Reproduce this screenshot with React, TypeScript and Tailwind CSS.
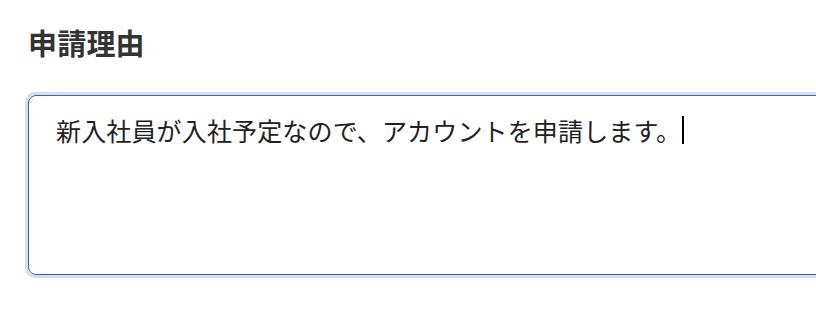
import React from "react";

export default function App() {
  return (
    <div
      className="w-[816px] h-[322px] overflow-hidden bg-white"
      style={{ fontFamily: '"Noto Sans CJK JP", "Noto Sans", sans-serif' }}
    >
      <div className="pl-[28px] pt-[22px]">
        <div className="text-[29px] leading-[40px] font-bold text-[#333333] tracking-[0.2px]">申請理由</div>
        <div className="mt-[30px] w-[820px] h-[186px] rounded-[10px] border-[3px] border-[#d3e1e5] -ml-[3px]">
          <div className="h-full rounded-[8px] border border-[#3a5ed0] pl-[27px] pt-[14px] text-[25px] leading-[40px] text-[#222222] flex items-start">
            <span className="tracking-[0.15px]">新入社員が入社予定なので、アカウントを申請します。</span>
            <span className="inline-block w-[2px] h-[28px] bg-black mt-[6px] ml-[1px]" />
          </div>
        </div>
      </div>
    </div>
  );
}
